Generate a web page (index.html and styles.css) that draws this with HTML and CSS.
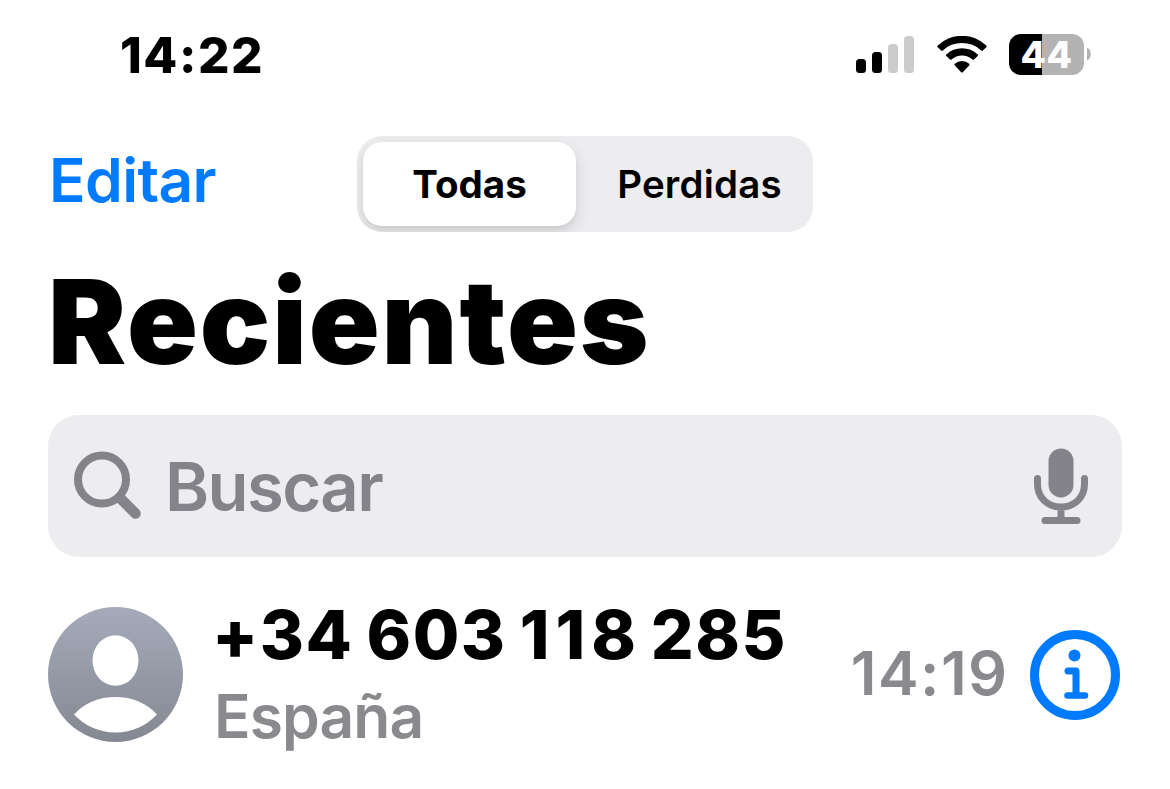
FILE: index.html
```
<!DOCTYPE html>
<html lang="es">
<head>
<meta charset="utf-8">
<title>Recientes</title>
<link rel="stylesheet" href="styles.css">
</head>
<body>
<div class="screen">
  <div class="status">
    <span class="clock">14:22</span>
    <div class="indicators">
      <svg class="signal" width="58" height="38" viewBox="0 0 58 38">
        <rect x="0" y="23" width="10" height="14" rx="3.5"/>
        <rect x="16" y="16" width="10" height="21" rx="3.5"/>
        <rect x="32" y="8" width="10" height="29" rx="3.5" fill="#ccc"/>
        <rect x="48" y="0" width="10" height="37" rx="3.5" fill="#ccc"/>
      </svg>
      <svg class="wifi" width="50" height="38" viewBox="0 0 50 38">
        <path d="M0.7 9.6A35 35 0 0 1 49.3 9.6Q50 10.400 49.300 11.200L45.800 14.600Q45 15.200 44.200 14.500A28 28 0 0 0 5.800 14.500Q5 15.200 4.200 14.600L0.700 11.200Q0 10.400 0.700 9.600Z"/>
        <path d="M9.300 18.400A23 23 0 0 1 40.700 18.400Q41.400 19.200 40.700 20L37 23.500Q36.200 24.200 35.400 23.500A15.500 15.500 0 0 0 14.600 23.500Q13.800 24.200 13 23.500L9.300 20Q8.600 19.200 9.300 18.400Z"/>
        <path d="M17.800 27.800A11 11 0 0 1 32.200 27.800Q33 28.600 32.200 29.400L25.800 36.200Q25 37 24.200 36.200L17.800 29.400Q17 28.600 17.800 27.800Z"/>
      </svg>
      <div class="battery"><span class="level">44</span></div>
      <svg class="cap" width="5" height="14" viewBox="0 0 5 14"><path d="M0 0.500C5 2 5 12 0 13.500Z" fill="#b3b3b3"/></svg>
    </div>
  </div>
  <div class="nav">
    <span class="edit">Editar</span>
    <div class="segments">
      <span class="segment active">Todas</span>
      <span class="segment missed">Perdidas</span>
    </div>
  </div>
  <h1 class="title">Recientes</h1>
  <div class="search">
    <svg class="lens" width="70" height="70" viewBox="0 0 70 70" fill="none" stroke="#848389">
      <circle cx="29" cy="28.500" r="24" stroke-width="8"/>
      <path d="M47 47L62.500 62.500" stroke-width="10.500" stroke-linecap="round"/>
    </svg>
    <span class="placeholder">Buscar</span>
    <svg class="mic" width="56" height="76" viewBox="0 0 56 76">
      <rect x="15.500" y="0.500" width="25" height="49" rx="12.500" fill="#848389"/>
      <path d="M4.500 30.500V36C4.500 49 14 59 28 59S51.500 49 51.500 36V30.500M28 59V72M12 72.500H44" fill="none" stroke="#848389" stroke-width="7" stroke-linecap="round"/>
    </svg>
  </div>
  <div class="call">
    <svg class="avatar" width="135" height="135" viewBox="0 0 135 135">
      <defs><linearGradient id="shade" x1="0" y1="0" x2="0" y2="1"><stop offset="0" stop-color="#a5abba"/><stop offset="1" stop-color="#848892"/></linearGradient></defs>
      <circle cx="67.500" cy="67.500" r="67.500" fill="url(#shade)"/>
      <ellipse cx="67.500" cy="53.500" rx="23" ry="25.300" fill="#fff"/>
      <path d="M26 107.500C36 96 51 90 67.500 90S99 96 109 107.500C98 119 84 125.500 67.500 125.500S37 119 26 107.500Z" fill="#fff"/>
    </svg>
    <div class="caller">
      <span class="number">+34 603 <span class="ones">11</span>8 285</span>
      <span class="place">España</span>
    </div>
    <span class="time">14:19</span>
    <svg class="info" width="90" height="90" viewBox="0 0 90 90">
      <circle cx="45" cy="45" r="40.500" fill="none" stroke="#007aff" stroke-width="9"/>
      <circle cx="44.500" cy="25.500" r="6" fill="#007aff"/>
      <path d="M38 41H46V65" fill="none" stroke="#007aff" stroke-width="7" stroke-linecap="round" stroke-linejoin="round"/>
      <path d="M37.500 65.500H55" stroke="#007aff" stroke-width="6.500" stroke-linecap="round"/>
    </svg>
  </div>
</div>
</body>
</html>
```
FILE: styles.css
```
* { box-sizing: border-box; }
body { margin: 0; background: #fff; color: #000; font-family: Inter, "Liberation Sans", sans-serif; line-height: 1; white-space: nowrap; }
.screen { width: 1170px; height: 789px; overflow: hidden; }
.status { height: 136px; padding: 31px 78px 0 120px; display: flex; justify-content: space-between; align-items: flex-start; }
.clock { font-size: 49.5px; font-weight: 800; letter-spacing: 1.5px; }
.indicators { display: flex; align-items: flex-start; padding-top: 3px; }
.signal { margin: 2px 23px 0 0; }
.wifi { margin: 2px 22px 0 0; }
.battery { width: 75px; height: 41px; border-radius: 12px; background: linear-gradient(90deg, #000 33px, #b3b3b3 33px); display: flex; justify-content: center; align-items: center; }
.level { color: #fff; font-size: 37px; font-weight: 800; letter-spacing: .6px; }
.cap { margin: 13px 0 0 3px; }
.nav { height: 96px; padding-left: 49px; display: flex; }
.edit { width: 308px; padding-top: 14px; font-size: 60.5px; font-weight: 600; letter-spacing: -.6px; color: #007aff; }
.segments { width: 456px; height: 96px; padding: 6px; display: flex; border-radius: 25px; background: #ededf0; overflow: hidden; }
.segment { flex: 1; display: flex; align-items: center; justify-content: center; font-size: 38.5px; font-weight: 600; border-radius: 19px; }
.segment.active { flex: 0 0 213px; background: #fff; font-weight: 700; box-shadow: 0 6px 16px rgba(0,0,0,.12), 0 4px 4px rgba(0,0,0,.04); }
.segment.missed { padding-left: 16px; letter-spacing: .2px; }
.title { margin: 0; padding: 31px 0 0 48px; height: 183px; font-size: 117px; font-weight: 900; letter-spacing: 1.9px; }
.search { margin: 0 48px; height: 142px; padding: 0 33px 0 25px; border-radius: 31px; background: #ededf0; display: flex; align-items: center; }
.placeholder { flex: 1; padding-left: 22px; font-size: 67px; font-weight: 600; letter-spacing: -1.6px; color: #848389; }
.call { padding: 44px 50px 0 48px; display: flex; align-items: flex-start; }
.avatar { margin-top: 6px; }
.caller { flex: 1; padding-left: 31px; display: flex; flex-direction: column; gap: 18px; }
.number { margin-left: -2px; font-size: 67.4px; font-weight: 800; letter-spacing: 1.5px; word-spacing: -3px; font-kerning: none; }
.ones { letter-spacing: 6px; }
.place { font-size: 60.5px; font-weight: 600; letter-spacing: -.9px; color: #8a8a8e; }
.time { padding: 42px 21px 0 0; font-size: 61px; font-weight: 600; letter-spacing: 1.4px; color: #8a8a8e; }
.info { margin: 29px .5px 0 0; }
```
